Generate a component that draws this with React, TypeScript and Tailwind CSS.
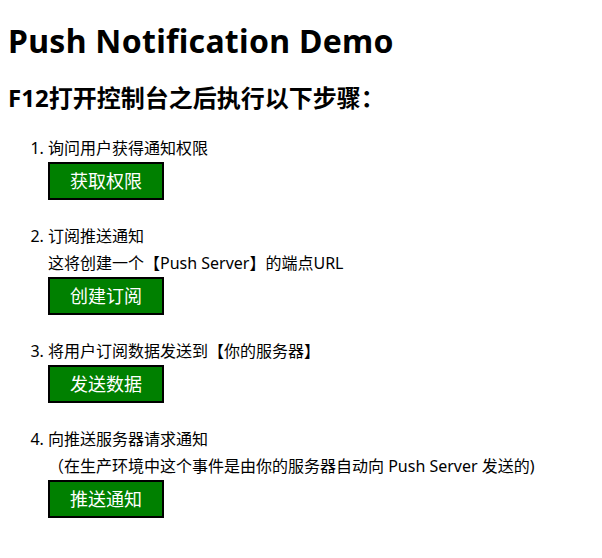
const steps = [
  { title: '询问用户获得通知权限', note: '', button: '获取权限' },
  { title: '订阅推送通知', note: '这将创建一个【Push Server】的端点URL', button: '创建订阅' },
  { title: '将用户订阅数据发送到【你的服务器】', note: '', button: '发送数据' },
  {
    title: '向推送服务器请求通知',
    note: '（在生产环境中这个事件是由你的服务器自动向 Push Server 发送的)',
    button: '推送通知',
  },
];

export default function App() {
  return (
    <div className="min-h-screen bg-white px-2 pt-[20px] pb-4 text-black font-['Noto_Sans','Noto_Sans_CJK_SC',sans-serif]">
      <h1 className="text-[32px] leading-[42px] font-bold tracking-[0.3px]">Push Notification Demo</h1>
      <h2 className="mt-[20px] text-[24px] leading-[32px] font-bold">F12打开控制台之后执行以下步骤：</h2>

      <ol className="mt-[24px] list-decimal pl-10 text-[16px] leading-[21px]">
        {steps.map((step, i) => (
          <li key={i} className={i > 0 ? 'mt-[26px]' : ''}>
            <div>{step.title}</div>
            {step.note && <div className="mt-[6px]">{step.note}</div>}
            <button className="mt-[3px] flex h-[38px] w-[116px] items-center justify-center border-2 border-black bg-[#008000] text-[18px] text-white">
              {step.button}
            </button>
          </li>
        ))}
      </ol>
    </div>
  );
}
